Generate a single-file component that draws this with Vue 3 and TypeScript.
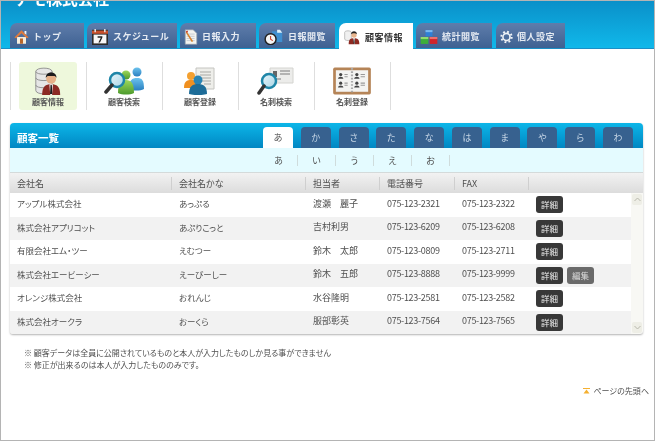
<script setup lang="ts">
interface Tab {
  label: string
  icon: string
  width: number
  gap: number
  iconWidth: number
}
interface Customer {
  name: string
  kana: string
  staff: string
  tel: string
  fax: string
  editable?: boolean
}

const tabs: Tab[] = [
  { label: 'トップ', icon: 'home', width: 74, gap: 3, iconWidth: 15 },
  { label: 'スケジュール', icon: 'calendar', width: 90, gap: 3, iconWidth: 18 },
  { label: '日報入力', icon: 'report', width: 76, gap: 3, iconWidth: 14 },
  { label: '日報閲覧', icon: 'clock', width: 76, gap: 4, iconWidth: 21 },
  { label: '顧客情報', icon: 'person', width: 74, gap: 3, iconWidth: 18 },
  { label: '統計閲覧', icon: 'cubes', width: 76, gap: 4, iconWidth: 18 },
  { label: '個人設定', icon: 'gear', width: 69, gap: 0, iconWidth: 13 }
]
const activeTab = '顧客情報'

const subMenu = [
  { label: '顧客情報', icon: 'bigPerson', active: true },
  { label: '顧客検索', icon: 'bigSearch', active: false },
  { label: '顧客登録', icon: 'bigRegister', active: false },
  { label: '名刺検索', icon: 'bigCard', active: false },
  { label: '名刺登録', icon: 'bigBook', active: false }
]

const kanaTabs = ['あ', 'か', 'さ', 'た', 'な', 'は', 'ま', 'や', 'ら', 'わ']
const kanaSub = ['あ', 'い', 'う', 'え', 'お']
const columns = ['会社名', '会社名かな', '担当者', '電話番号', 'FAX', '']

const customers: Customer[] = [
  { name: 'アップル株式会社', kana: 'あっぷる', staff: '渡瀬　麗子', tel: '075-123-2321', fax: '075-123-2322' },
  { name: '株式会社アプリコット', kana: 'あぷりこっと', staff: '吉村利男', tel: '075-123-6209', fax: '075-123-6208' },
  { name: '有限会社エム・ツー', kana: 'えむつー', staff: '鈴木　太郎', tel: '075-123-0809', fax: '075-123-2711' },
  { name: '株式会社エービーシー', kana: 'えーびーしー', staff: '鈴木　五郎', tel: '075-123-8888', fax: '075-123-9999', editable: true },
  { name: 'オレンジ株式会社', kana: 'おれんじ', staff: '水谷隆明', tel: '075-123-2581', fax: '075-123-2582' },
  { name: '株式会社オークラ', kana: 'おーくら', staff: '服部彰英', tel: '075-123-7564', fax: '075-123-7565' }
]
</script>

<template>
  <div class="page">
    <svg class="defs" width="0" height="0">
      <defs>
        <linearGradient id="blueBall" x1="0" y1="0" x2="0" y2="1">
          <stop offset="0" stop-color="#6cc3ee" />
          <stop offset="1" stop-color="#2a7fc0" />
        </linearGradient>
        <linearGradient id="greenBall" x1="0" y1="0" x2="0" y2="1">
          <stop offset="0" stop-color="#9ed85c" />
          <stop offset="1" stop-color="#4c9a2c" />
        </linearGradient>
        <linearGradient id="lens" x1="0" y1="0" x2="1" y2="1">
          <stop offset="0" stop-color="#e8f6fb" />
          <stop offset="1" stop-color="#a9d4e4" />
        </linearGradient>

        <symbol id="home" viewBox="0 0 20 20">
          <path d="M4 10h12v9H4Z" fill="#f6eedd" />
          <path d="M10 1 19.500 10.500 17 11.500 10 5 3 11.500 .5 10.500Z" fill="#dd7a3c" />
          <path d="M14 2h2.500v5L14 5Z" fill="#f4f4f4" />
          <rect x="8" y="12" width="4" height="7" fill="#b8662c" />
        </symbol>
        <symbol id="calendar" viewBox="0 0 22 20">
          <rect x="1" y="1" width="20" height="19" fill="#2b2b2b" />
          <rect x="3" y="7" width="16" height="11" fill="#f7f7f7" />
          <rect x="1" y="2" width="20" height="4" fill="#c9502c" />
          <rect x="4" y="0" width="2" height="4" fill="#ddd" />
          <rect x="16" y="0" width="2" height="4" fill="#ddd" />
          <path d="M8 9h6v1.500L11 17H9l3-6H8Z" fill="#222" />
        </symbol>
        <symbol id="report" viewBox="0 0 18 22">
          <path d="M1 1h11l5 5v15H1Z" fill="#f4f4f0" stroke="#8a98a8" />
          <path d="M3 7h11M3 10h11M3 13h11M3 16h11" stroke="#b4bcc8" />
          <path d="M3 3 12 17 10 18 2 5Z" fill="#d9822b" />
          <path d="M2 3 4 2 5 4 3 5Z" fill="#c8372d" />
        </symbol>
        <symbol id="clock" viewBox="0 0 26 22">
          <path d="M11 3h12l2 2v13H11Z" fill="#3f8fd0" />
          <path d="M18 1h4l3 4h-7Z" fill="#dff0fa" />
          <circle cx="9" cy="14" r="7.500" fill="#f4f4f4" stroke="#222" stroke-width="2" />
          <path d="M9 9.500V14l3 2" fill="none" stroke="#c8402c" stroke-width="1.500" />
        </symbol>
        <symbol id="person" viewBox="0 0 24 24">
          <path d="M1 5c0-3 10-3 10 0v10c0 3-10 3-10 0Z" fill="#f0f0f0" stroke="#a8a8a8" />
          <circle cx="15" cy="9" r="4" fill="#e8b48c" />
          <path d="M10.500 8c0-6 9-6 9 0-2-2-7-2-9 0Z" fill="#222" />
          <path d="M7 23c0-8 3-9 8-9s8 1 8 9Z" fill="#8e2a22" />
          <path d="M13.500 14h3L16 23h-1Z" fill="#f3f3f3" />
          <path d="M14.500 15h1l.5 7h-2Z" fill="#222" />
        </symbol>
        <symbol id="cubes" viewBox="0 0 26 22">
          <rect x="8" y="1" width="10" height="9" fill="#2f7fd6" />
          <rect x="8" y="1" width="10" height="3" fill="#7ab8ee" />
          <rect x="1" y="11" width="11" height="10" fill="#3cae3a" />
          <rect x="1" y="11" width="11" height="3" fill="#92dc70" />
          <rect x="14" y="11" width="11" height="10" fill="#d0242a" />
          <rect x="14" y="11" width="11" height="3" fill="#f0706a" />
        </symbol>
        <symbol id="gear" viewBox="0 0 20 20">
          <circle cx="10" cy="10" r="5.500" fill="none" stroke="#eef2f6" stroke-width="2.500" />
          <circle cx="10" cy="10" r="8" fill="none" stroke="#eef2f6" stroke-width="3" stroke-dasharray="2.800 3.480" />
        </symbol>

        <symbol id="bigPerson" viewBox="0 0 29 31">
          <path d="M1 5c0-5 18-5 18 0v21c0 5-18 5-18 0Z" fill="#e6e6e6" stroke="#8c8c8c" />
          <path d="M1 12c0 4 18 4 18 0M1 20c0 4 18 4 18 0M1 5c0 4 18 4 18 0" fill="none" stroke="#8c8c8c" />
          <circle cx="18" cy="13" r="5.500" fill="#e6b088" />
          <path d="M12 12c0-8 12-8 12 0l-2-2h-8Z" fill="#1c1c1c" />
          <path d="M8 31c0-10 4-12 10-12s10 2 10 12Z" fill="#8c2a24" />
          <path d="M16 19h4l-1 12h-2Z" fill="#f4f4f4" />
          <path d="M17.300 20h1.400l.6 10h-2.600Z" fill="#1c1c1c" />
        </symbol>
        <symbol id="bigSearch" viewBox="0 0 40 28">
          <circle cx="33" cy="5" r="4.500" fill="url(#blueBall)" />
          <path d="M25 22c0-9 3-11 8-11s7 2 7 11c-4 2-11 2-15 0Z" fill="url(#blueBall)" />
          <circle cx="22" cy="8" r="4.500" fill="url(#greenBall)" />
          <path d="M14 26c0-10 3-13 8-13s8 3 8 13c-4 2-12 2-16 0Z" fill="url(#greenBall)" />
          <circle cx="13" cy="13" r="7" fill="url(#lens)" stroke="#1f86a8" stroke-width="2.500" />
          <path d="M8 18 2 25" stroke="#333" stroke-width="3.500" stroke-linecap="round" />
        </symbol>
        <symbol id="bigRegister" viewBox="0 0 32 28">
          <path d="M12 1h18v21H12Z" fill="#eeeeea" stroke="#c4c4c0" />
          <path d="M16 5h11M16 8h11M16 11h11M18 14h9M20 17h7" stroke="#a8a8a4" />
          <circle cx="7" cy="9" r="4" fill="#f4a030" />
          <path d="M0 21c0-7 3-8 7-8s7 1 7 8Z" fill="#f09020" />
          <circle cx="14" cy="13" r="4.500" fill="#2a84b4" />
          <path d="M5 27c0-8 4-10 9-10s9 2 9 10c-4 1.500-14 1.500-18 0Z" fill="#1d6c98" />
        </symbol>
        <symbol id="bigCard" viewBox="0 0 36 28">
          <path d="M12 1h23v15H12Z" fill="#ececea" stroke="#d4d4d0" />
          <rect x="15" y="4" width="4" height="6" fill="#666" />
          <path d="M22 4h10M22 7h10M15 12h8" stroke="#a0a0a0" stroke-width="1.500" />
          <circle cx="11" cy="14" r="7" fill="url(#lens)" stroke="#1f86a8" stroke-width="2.500" />
          <path d="M6 19 1 26" stroke="#333" stroke-width="3.500" stroke-linecap="round" />
        </symbol>
        <symbol id="bigBook" viewBox="0 0 36 26">
          <rect x="0.500" y="0.500" width="35" height="25" rx="1.500" fill="#b58457" />
          <rect x="3" y="3" width="30" height="20" fill="#f4f4f2" />
          <g fill="#444">
            <circle cx="7.500" cy="7" r="1.500" /><path d="M5 11c0-2.500 5-2.500 5 0Z" />
            <circle cx="22.500" cy="7" r="1.500" /><path d="M20 11c0-2.500 5-2.500 5 0Z" />
            <circle cx="7.500" cy="15" r="1.500" /><path d="M5 19c0-2.500 5-2.500 5 0Z" />
            <circle cx="22.500" cy="15" r="1.500" /><path d="M20 19c0-2.500 5-2.500 5 0Z" />
          </g>
          <path d="M11 7h3M11 9h3M26 7h4M26 9h4M11 15h3M11 17h3M26 15h4M26 17h4" stroke="#999" />
          <path d="M18 1v24" stroke="#aaa" stroke-dasharray="1.500 1.500" stroke-width="2" />
        </symbol>
      </defs>
    </svg>

    <header class="header">
      <div class="title-clip"><h1 class="title">アモ株式会社</h1></div>
      <nav class="tabs">
        <a
          v-for="tab in tabs"
          :key="tab.label"
          class="tab"
          :class="{ active: tab.label === activeTab }"
          :style="{ width: tab.width + 'px', marginRight: tab.gap + 'px' }"
        >
          <svg class="tab-icon" :style="{ width: tab.iconWidth + 'px' }"><use :href="'#' + tab.icon" /></svg>
          <span>{{ tab.label }}</span>
        </a>
      </nav>
    </header>

    <main class="main">
      <ul class="submenu">
        <li v-for="item in subMenu" :key="item.label" class="submenu-item">
          <div class="submenu-card" :class="{ active: item.active }">
            <svg class="submenu-icon"><use :href="'#' + item.icon" /></svg>
            <span>{{ item.label }}</span>
          </div>
        </li>
      </ul>

      <section class="panel">
        <div class="panel-head">
          <h2 class="panel-title">顧客一覧</h2>
          <div class="kana-tabs">
            <span v-for="(k, i) in kanaTabs" :key="k" class="kana-tab" :class="{ active: i === 0 }">{{ k }}</span>
          </div>
        </div>
        <div class="kana-sub">
          <span v-for="k in kanaSub" :key="k" class="kana-sub-item">{{ k }}</span>
        </div>
        <div class="row head">
          <div v-for="(c, i) in columns" :key="i" class="cell">{{ c }}</div>
        </div>
        <div class="body">
          <div class="rows">
            <div v-for="c in customers" :key="c.name" class="row item">
              <div class="cell company">{{ c.name }}</div>
              <div class="cell company">{{ c.kana }}</div>
              <div class="cell">{{ c.staff }}</div>
              <div class="cell num">{{ c.tel }}</div>
              <div class="cell num">{{ c.fax }}</div>
              <div class="cell actions">
                <button class="btn">詳細</button>
                <button v-if="c.editable" class="btn edit">編集</button>
              </div>
            </div>
          </div>
          <div class="scrollbar">
            <span class="arrow"><svg width="7" height="5"><path d="M0.500 4 3.500 1 6.500 4" fill="none" stroke="#b8b8ac" /></svg></span>
            <span class="arrow"><svg width="7" height="5"><path d="M0.500 1 3.500 4 6.500 1" fill="none" stroke="#b8b8ac" /></svg></span>
          </div>
        </div>
      </section>

      <div class="notes">
        <p>※ 顧客データは全員に公開されているものと本人が入力したものしか見る事ができません</p>
        <p>※ 修正が出来るのは本人が入力したもののみです。</p>
      </div>

      <div class="to-top">
        <svg width="7" height="6"><path d="M0 0h7v1H0Z M3.500 1.500 6.500 5.500H.5Z" fill="#f5b030" /></svg>
        <span>ページの先頭へ</span>
      </div>
    </main>
  </div>
</template>

<style scoped>
.page {
  box-sizing: border-box;
  width: 655px;
  height: 441px;
  border: 1px solid #b4b4b4;
  overflow: hidden;
  background: #fff;
  color: #505050;
  font-family: "Noto Sans CJK JP", "Liberation Sans", sans-serif;
  font-size: 9px;
  font-feature-settings: "palt";
}
.defs {
  display: block;
}
.header {
  height: 47px;
  background: linear-gradient(#0a90c9, #10b8ea);
  border-bottom: 1px solid #1b8fc6;
  filter: blur(0.300px);
}
.title-clip {
  height: 7px;
  overflow: hidden;
  display: flex;
  align-items: flex-end;
  padding-left: 14px;
}
.title {
  flex: none;
  margin: 0;
  color: #fff;
  font-size: 16px;
  line-height: 20px;
  font-weight: 700;
  font-feature-settings: normal;
  letter-spacing: -0.400px;
}
.tabs {
  display: flex;
  margin-top: 15px;
  padding-left: 9px;
}
.tab {
  position: relative;
  box-sizing: border-box;
  height: 25px;
  display: flex;
  align-items: center;
  gap: 4px;
  padding: 2px 0 0 4px;
  border-radius: 7px 0 0 0;
  background: linear-gradient(#5f7dab, #3e6192);
  color: #e6ebf2;
  font-size: 9px;
  font-weight: 700;
  letter-spacing: 0.500px;
  white-space: nowrap;
  font-feature-settings: normal;
}
.tab::after {
  content: "";
  position: absolute;
  top: 0;
  right: 0;
  bottom: 0;
  width: 18px;
  background: inherit;
  border-radius: 0 7px 0 0;
  transform: skewX(18deg);
  transform-origin: bottom right;
}
.tab > * {
  position: relative;
  z-index: 1;
}
.tab.active {
  background: #fff;
  color: #333;
  height: 26px;
}
.tab-icon {
  height: 16px;
  flex: none;
}
.main {
  padding: 13px 10px 0 9px;
  filter: blur(0.300px);
}
.submenu {
  list-style: none;
  margin: 0;
  padding: 0;
  display: flex;
  height: 48px;
}
.submenu-item {
  box-sizing: border-box;
  width: 76px;
  border-left: 1px solid #dedede;
  padding: 0 9px 0 8px;
}
.submenu-item:last-child {
  width: 77px;
  border-right: 1px solid #dedede;
}
.submenu-card {
  height: 48px;
  border-radius: 3px;
  display: flex;
  flex-direction: column;
  align-items: center;
  justify-content: flex-end;
  gap: 1px;
  padding-bottom: 2px;
  box-sizing: border-box;
  font-weight: 700;
  font-size: 8px;
  line-height: 12px;
  color: #555;
  white-space: nowrap;
  font-feature-settings: normal;
}
.submenu-card.active {
  background: #eef8dc;
}
.submenu-icon {
  width: 40px;
  height: 28px;
}
.panel {
  margin-top: 13px;
  width: 633px;
  border-radius: 4px 4px 3px 3px;
  box-shadow: 0 1px 2px rgba(0, 0, 0, 0.3);
  background: #f8f8f4;
  overflow: hidden;
}
.panel-head {
  height: 25px;
  display: flex;
  justify-content: space-between;
  align-items: flex-end;
  background: linear-gradient(#0db6e8, #0087c3);
  padding: 0 10px 0 7px;
}
.panel-title {
  margin: 0 0 3px;
  color: #fff;
  font-size: 10.500px;
  line-height: 14px;
  font-weight: 700;
  font-feature-settings: normal;
}
.kana-tabs {
  display: flex;
  gap: 7.780px;
}
.kana-tab {
  width: 30px;
  height: 21px;
  line-height: 21px;
  text-align: center;
  background: #37618f;
  color: #c6d6e6;
  border-radius: 4px 4px 0 0;
}
.kana-tab.active {
  background: #fff;
  color: #505050;
}
.kana-sub {
  height: 25px;
  box-sizing: border-box;
  display: flex;
  align-items: center;
  padding-left: 250px;
  background: #e4fbff;
  border-bottom: 1px solid #d4dada;
}
.kana-sub-item {
  width: 38px;
  height: 11px;
  line-height: 11px;
  text-align: center;
  border-right: 1px solid #cfdcdc;
  box-sizing: border-box;
}
.row {
  display: grid;
  grid-template-columns: 162px 134px 74px 75px 74px 1fr;
  align-items: center;
}
.head {
  height: 20px;
  background: linear-gradient(#f2f2f2, #dcdcdc);
}
.head .cell {
  height: 13px;
  line-height: 13px;
  border-right: 1px solid #cfcfcf;
}
.head .cell:last-child {
  border-right: 0;
}
.cell {
  box-sizing: border-box;
  padding-left: 7px;
  white-space: nowrap;
}
.company {
  font-size: 8.500px;
}
.body {
  display: flex;
}
.rows {
  width: 621px;
}
.item {
  height: 23.500px;
  background: #fff;
}
.item:nth-child(even) {
  background: #f2f2f2;
}
.item .cell {
  margin-top: -3.500px;
}
.num {
  letter-spacing: -0.300px;
}
.item .actions {
  display: flex;
  gap: 4px;
  margin-top: 0;
}
.btn {
  box-sizing: border-box;
  width: 27px;
  height: 17px;
  padding: 0;
  border: 0;
  border-radius: 3px;
  background: #383838;
  color: #eee;
  font: inherit;
  font-size: 8.500px;
  line-height: 17px;
}
.btn.edit {
  background: #6a6a6a;
  color: #ddd;
}
.scrollbar {
  flex: 1;
  display: flex;
  flex-direction: column;
  justify-content: space-between;
}
.arrow {
  height: 11px;
  margin: 1px;
  display: flex;
  align-items: center;
  justify-content: center;
  background: #eeeee6;
  border-radius: 2px;
}
.notes {
  margin-top: 13px;
  padding-left: 14px;
  line-height: 12px;
  font-size: 8px;
}
.notes p {
  margin: 0;
}
.to-top {
  margin-top: 14px;
  display: flex;
  justify-content: flex-end;
  align-items: center;
  gap: 3px;
  margin-right: -5px;
  font-size: 8px;
  line-height: 12px;
}
</style>

<style>
html,
body {
  margin: 0;
  background: #fff;
}
</style>
